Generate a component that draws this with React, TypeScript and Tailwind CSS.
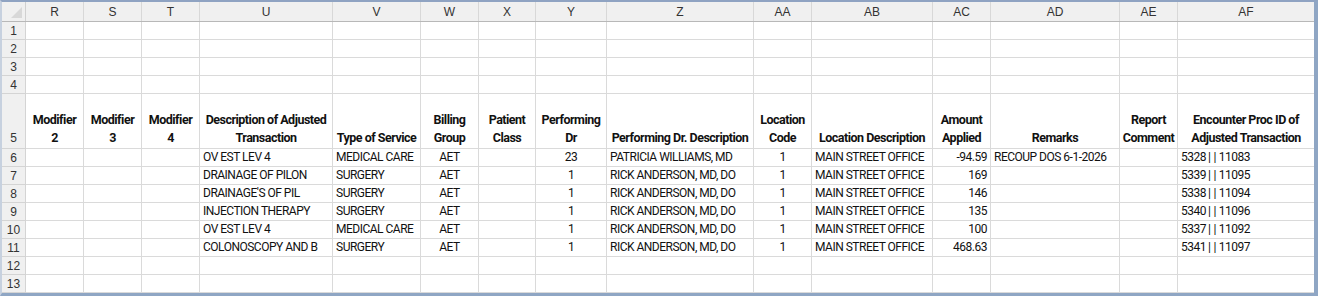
const cols = [
  { key: "R", w: "w-[58px]" },
  { key: "S", w: "w-[58px]" },
  { key: "T", w: "w-[58px]" },
  { key: "U", w: "w-[133px]" },
  { key: "V", w: "w-[88px]" },
  { key: "W", w: "w-[58px]" },
  { key: "X", w: "w-[57px]" },
  { key: "Y", w: "w-[71px]" },
  { key: "Z", w: "w-[147px]" },
  { key: "AA", w: "w-[58px]" },
  { key: "AB", w: "w-[121px]" },
  { key: "AC", w: "w-[58px]" },
  { key: "AD", w: "w-[129px]" },
  { key: "AE", w: "w-[58px]" },
  { key: "AF", w: "w-[136px]" },
];

const heads = [
  "Modifier 2",
  "Modifier 3",
  "Modifier 4",
  "Description of Adjusted Transaction",
  "Type of Service",
  "Billing Group",
  "Patient Class",
  "Performing Dr",
  "Performing Dr. Description",
  "Location Code",
  "Location Description",
  "Amount Applied",
  "Remarks",
  "Report Comment",
  "Encounter Proc ID of Adjusted Transaction",
];

// alignment of data cells per column
const align = [
  "text-left", "text-left", "text-left", "text-left", "text-left",
  "text-center", "text-left", "text-center", "text-left", "text-center",
  "text-left", "text-right", "text-left", "text-left", "text-left",
];

const rows: string[][] = [
  ["", "", "", "OV EST LEV 4", "MEDICAL CARE", "AET", "", "23", "PATRICIA WILLIAMS, MD", "1", "MAIN STREET OFFICE", "-94.59", "RECOUP DOS 6-1-2026", "", "5328||11083"],
  ["", "", "", "DRAINAGE OF PILON", "SURGERY", "AET", "", "1", "RICK ANDERSON, MD, DO", "1", "MAIN STREET OFFICE", "169", "", "", "5339||11095"],
  ["", "", "", "DRAINAGE'S OF PIL", "SURGERY", "AET", "", "1", "RICK ANDERSON, MD, DO", "1", "MAIN STREET OFFICE", "146", "", "", "5338||11094"],
  ["", "", "", "INJECTION THERAPY", "SURGERY", "AET", "", "1", "RICK ANDERSON, MD, DO", "1", "MAIN STREET OFFICE", "135", "", "", "5340||11096"],
  ["", "", "", "OV EST LEV 4", "MEDICAL CARE", "AET", "", "1", "RICK ANDERSON, MD, DO", "1", "MAIN STREET OFFICE", "100", "", "", "5337||11092"],
  ["", "", "", "COLONOSCOPY AND B", "SURGERY", "AET", "", "1", "RICK ANDERSON, MD, DO", "1", "MAIN STREET OFFICE", "468.63", "", "", "5341||11097"],
];

const cellFont = "font-['Roboto',sans-serif]";

// encounter ids: pipes sit a little apart from the digits
function Cell({ text }: { text: string }) {
  if (!text.includes("|")) return <>{text}</>;
  const parts = text.split("||");
  return (
    <>
      {parts[0]}
      <span className="ml-[2px] mr-[3px]">|</span>
      <span className="mr-[3px]">|</span>
      {parts[1]}
    </>
  );
}

function RowNum({ n, tall }: { n: number; tall?: boolean }) {
  return (
    <div
      className={`w-[24px] shrink-0 bg-[#f0f0f0] border-r border-b border-[#d4d4d4] text-[12px] text-[#333] font-['Liberation_Sans',sans-serif] flex justify-center ${
        tall ? "h-[55px] items-end pb-[1px]" : "h-[18px] items-center"
      }`}
    >
      {n}
    </div>
  );
}

function EmptyRow({ n }: { n: number }) {
  return (
    <div className="flex">
      <RowNum n={n} />
      {cols.map((c) => (
        <div key={c.key} className={`${c.w} shrink-0 h-[18px] border-r border-b border-[#dadada] last:border-r-0`} />
      ))}
    </div>
  );
}

export default function App() {
  return (
    <div className="w-[1318px] h-[296px] bg-white border-t-2 border-l-2 border-r-4 border-b-[3px] border-t-[#8fa3c2] border-l-[#c7d1df] border-r-[#8fa6c4] border-b-[#8fa6c4] overflow-hidden">
      {/* column letters */}
      <div className="flex h-[20px] bg-[#f0f0f0] border-b border-[#b8b8b8]">
        <div className="w-[24px] shrink-0 border-r border-[#d0d0d0] relative">
          <div className="absolute right-[3px] bottom-[3px] w-0 h-0 border-l-[11px] border-l-transparent border-b-[11px] border-b-[#d8d8d8]" />
        </div>
        {cols.map((c) => (
          <div
            key={c.key}
            className={`${c.w} shrink-0 border-r border-[#d8d8d8] last:border-r-0 flex items-center justify-center text-[12px] text-[#333] font-['Liberation_Sans',sans-serif]`}
          >
            {c.key}
          </div>
        ))}
      </div>

      {[1, 2, 3, 4].map((n) => (
        <EmptyRow key={n} n={n} />
      ))}

      {/* field names */}
      <div className="flex">
        <RowNum n={5} tall />
        {cols.map((c, i) => (
          <div
            key={c.key}
            className={`${c.w} shrink-0 h-[55px] border-r border-b border-[#dadada] last:border-r-0 flex items-end justify-center px-[3px] pb-[1px]`}
          >
            <span className={`${cellFont} font-bold text-[12.5px] tracking-[-0.5px] leading-[18px] text-center text-[#111]`}>{heads[i]}</span>
          </div>
        ))}
      </div>

      {rows.map((r, ri) => (
        <div key={ri} className="flex">
          <RowNum n={ri + 6} />
          {cols.map((c, i) => (
            <div
              key={c.key}
              className={`${c.w} shrink-0 h-[18px] border-r border-b border-[#dadada] last:border-r-0 px-[3px] ${align[i]} ${cellFont} text-[12px] tracking-[-0.5px] leading-[17px] text-[#111] whitespace-nowrap overflow-hidden`}
            >
              <Cell text={r[i]} />
            </div>
          ))}
        </div>
      ))}

      {[12, 13].map((n) => (
        <EmptyRow key={n} n={n} />
      ))}
    </div>
  );
}
